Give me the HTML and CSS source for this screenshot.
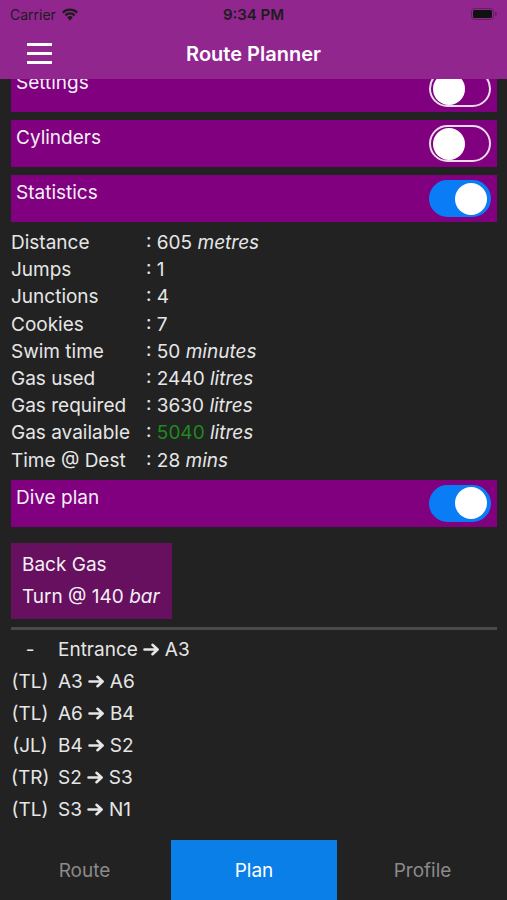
FILE: index.html
```html
<!DOCTYPE html>
<html lang="en">
<head>
    <meta charset="UTF-8">
    <meta name="viewport" content="width=device-width, initial-scale=1.0">
    <title>Route Planner</title>
    <link rel="stylesheet" href="styles.css">
</head>
<body>

<header class="header">
    <div class="status">
        <div class="carrier">
            Carrier
            <svg class="wifi" width="18" height="13" viewBox="0 0 18 13">
                <path d="M9 12.5 L6.2 9.4 A4 4 0 0 1 11.8 9.4 Z" fill="#1c1c1c"/>
                <path d="M3.6 6.6 A7.6 7.6 0 0 1 14.4 6.6 L12.9 8.2 A5.4 5.4 0 0 0 5.1 8.2 Z" fill="#1c1c1c"/>
                <path d="M1 3.9 A11.3 11.3 0 0 1 17 3.9 L15.5 5.5 A9.1 9.1 0 0 0 2.5 5.5 Z" fill="#1c1c1c"/>
            </svg>
        </div>
        <div class="clock">9:34 PM</div>
        <div class="battery">
            <svg width="26" height="12" viewBox="0 0 26 12">
                <rect x="0.5" y="0.5" width="22" height="11" rx="3" fill="none" stroke="#1c1c1c" stroke-opacity="0.4"/>
                <rect x="2" y="2" width="19" height="8" rx="1.6" fill="#111"/>
                <path d="M24 4 a2 2 0 0 1 0 4 Z" fill="#1c1c1c" fill-opacity="0.4"/>
            </svg>
        </div>
    </div>
    <div class="navbar">
        <div class="menu">
            <span></span><span></span><span></span>
        </div>
        <div class="title">Route Planner</div>
    </div>
</header>

<main class="content">
    <div class="inner">
        <div class="row first">
            <span>Settings</span>
            <div class="toggle"><div class="knob"></div></div>
        </div>
        <div class="row">
            <span>Cylinders</span>
            <div class="toggle"><div class="knob"></div></div>
        </div>
        <div class="row">
            <span>Statistics</span>
            <div class="toggle on"><div class="knob"></div></div>
        </div>

        <div class="stats">
            <div class="stat"><span class="label">Distance</span><span>: 605 <i>metres</i></span></div>
            <div class="stat"><span class="label">Jumps</span><span>: 1</span></div>
            <div class="stat"><span class="label">Junctions</span><span>: 4</span></div>
            <div class="stat"><span class="label">Cookies</span><span>: 7</span></div>
            <div class="stat"><span class="label">Swim time</span><span>: 50 <i>minutes</i></span></div>
            <div class="stat"><span class="label">Gas used</span><span>: 2440 <i>litres</i></span></div>
            <div class="stat"><span class="label">Gas required</span><span>: 3630 <i>litres</i></span></div>
            <div class="stat"><span class="label">Gas available</span><span>: <span class="green">5040</span> <i>litres</i></span></div>
            <div class="stat"><span class="label">Time @ Dest</span><span>: 28 <i>mins</i></span></div>
        </div>

        <div class="row">
            <span>Dive plan</span>
            <div class="toggle on"><div class="knob"></div></div>
        </div>

        <div class="gas-box">
            <div>Back Gas</div>
            <div>Turn @ 140 <i>bar</i></div>
        </div>

        <hr class="divider">

        <div class="legs" id="legs"></div>
    </div>
</main>

<nav class="tabs">
    <div class="tab">Route</div>
    <div class="tab active">Plan</div>
    <div class="tab">Profile</div>
</nav>

<script>
    var legs = [
        { turn: '-', from: 'Entrance', to: 'A3' },
        { turn: '(TL)', from: 'A3', to: 'A6' },
        { turn: '(TL)', from: 'A6', to: 'B4' },
        { turn: '(JL)', from: 'B4', to: 'S2' },
        { turn: '(TR)', from: 'S2', to: 'S3' },
        { turn: '(TL)', from: 'S3', to: 'N1' }
    ];

    var arrowSvg = '<svg class="arrow" width="17" height="13" viewBox="0 0 17 13">' +
        '<path d="M1.5 6.5 H14.5 M9.5 1.8 L14.6 6.5 L9.5 11.2" fill="none" stroke="#e6e6e6" stroke-width="2.6" stroke-linecap="round" stroke-linejoin="round"/>' +
        '</svg>';

    var legsContainer = document.getElementById('legs');
    legs.forEach(function(leg) {
        var row = document.createElement('div');
        row.classList.add('leg');
        row.innerHTML = '<span class="turn">' + leg.turn + '</span>' +
            '<span class="path">' + leg.from + arrowSvg + leg.to + '</span>';
        legsContainer.appendChild(row);
    });
</script>

</body>
</html>
```

FILE: styles.css
```css
body {
    margin: 0;
    font-family: 'Inter', 'Liberation Sans', sans-serif;
    background-color: #222222;
    color: #e6e6e6;
    height: 900px;
    display: flex;
    flex-direction: column;
    overflow: hidden;
}

.header {
    background-color: #92268f;
    height: 79px;
    flex-shrink: 0;
    position: relative;
    z-index: 2;
}

.status {
    height: 28px;
    display: flex;
    align-items: center;
    justify-content: space-between;
    padding: 0 10px;
    color: #1c1c1c;
    position: relative;
}

.carrier {
    font-size: 14px;
    display: flex;
    align-items: center;
    gap: 5px;
}

.clock {
    position: absolute;
    left: 0;
    right: 0;
    text-align: center;
    font-size: 15px;
    font-weight: 600;
}

.battery {
    display: flex;
    align-items: center;
}

.navbar {
    height: 51px;
    display: flex;
    align-items: center;
    position: relative;
}

.menu {
    margin-left: 27px;
    width: 25px;
    display: flex;
    flex-direction: column;
    gap: 6px;
}

.menu span {
    display: block;
    height: 3px;
    background-color: white;
}

.title {
    position: absolute;
    left: 0;
    right: 0;
    text-align: center;
    color: white;
    font-size: 20px;
    font-weight: 600;
    pointer-events: none;
}

.content {
    flex: 1;
    overflow: hidden;
}

.inner {
    margin-top: -14px;
    padding: 0 10px 0 11px;
}

.row {
    background-color: #800080;
    height: 47px;
    margin-bottom: 8px;
    display: flex;
    justify-content: space-between;
    align-items: center;
    padding: 0 6px 0 5px;
    color: #f4f0f4;
    font-size: 19px;
}

.row span {
    align-self: flex-start;
    margin-top: 6px;
}

.toggle {
    width: 54px;
    height: 33px;
    border: 2px solid #e9dce9;
    border-radius: 20px;
    display: flex;
    align-items: center;
    padding: 0 2px;
    box-sizing: content-box;
}

.knob {
    width: 32px;
    height: 32px;
    border-radius: 50%;
    background-color: white;
}

.toggle.on {
    background-color: #0a7cf5;
    border-color: #0a7cf5;
    justify-content: flex-end;
}

.stats {
    margin-top: -1px;
    margin-bottom: 6px;
    font-size: 19px;
}

.stat {
    height: 27.2px;
    line-height: 27.2px;
    display: flex;
}

.label {
    width: 135px;
}

.green {
    color: #1e8a1e;
}

.gas-box {
    background-color: #66105f;
    width: 161px;
    height: 76px;
    margin-top: 16px;
    padding-left: 11px;
    padding-top: 6px;
    box-sizing: border-box;
    font-size: 19px;
    line-height: 32px;
    color: #f4f0f4;
}

.divider {
    border: none;
    height: 3px;
    background-color: #4a4a4a;
    margin: 8px 0 4px 0;
}

.legs {
    font-size: 19px;
}

.leg {
    height: 32px;
    line-height: 32px;
    display: flex;
}

.turn {
    width: 38px;
    text-align: center;
    margin-right: 9px;
}

.path {
    display: flex;
    align-items: center;
}

.arrow {
    margin: 0 5px;
}

.tabs {
    height: 60px;
    flex-shrink: 0;
    display: grid;
    grid-template-columns: 1fr 1fr 1fr;
    background-color: #222222;
}

.tab {
    display: flex;
    align-items: center;
    justify-content: center;
    font-size: 19px;
    color: #8a8a8a;
}

.tab.active {
    background-color: #0a7fe8;
    color: white;
    margin: 0 1px 0 2px;
}
```
